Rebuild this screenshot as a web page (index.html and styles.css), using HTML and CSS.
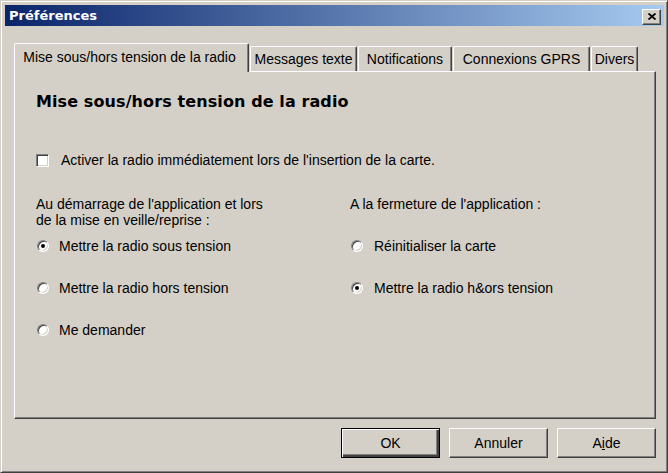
FILE: index.html
```html
<!DOCTYPE html>
<html lang="fr">
<head>
  <meta charset="UTF-8" />
  <title>Préférences</title>
  <link rel="stylesheet" href="styles.css">
</head>
<body>
  <div class="window">
    <div class="titlebar">
      <span class="title">Préférences</span>
      <button class="close" aria-label="Fermer">
        <svg width="8" height="7" viewBox="0 0 8 7">
          <path d="M0.5 0.5 L7.5 6.5 M7.5 0.5 L0.5 6.5" stroke="#000" stroke-width="1.8" fill="none"/>
        </svg>
      </button>
    </div>

    <div class="content">
      <div class="tabs">
        <div class="tab active">Mise sous/hors tension de la radio</div>
        <div class="tab tab-messages">Messages texte</div>
        <div class="tab tab-notif">Notifications</div>
        <div class="tab tab-gprs">Connexions GPRS</div>
        <div class="tab tab-divers">Divers</div>
      </div>

      <div class="panel">
        <h1>Mise sous/hors tension de la radio</h1>

        <label class="row check-row">
          <span class="checkbox"></span>
          Activer la radio immédiatement lors de l'insertion de la carte.
        </label>

        <div class="columns">
          <div class="column">
            <div class="group-label">Au démarrage de l'application et lors<br>de la mise en veille/reprise :</div>
            <label class="row radio-row"><span class="radio on"></span>Mettre la radio sous tension</label>
            <label class="row radio-row"><span class="radio"></span>Mettre la radio hors tension</label>
            <label class="row radio-row"><span class="radio"></span>Me demander</label>
          </div>
          <div class="column right">
            <div class="group-label">A la fermeture de l'application :</div>
            <label class="row radio-row"><span class="radio"></span>Réinitialiser la carte</label>
            <label class="row radio-row"><span class="radio on"></span>Mettre la radio h&amp;ors tension</label>
          </div>
        </div>
      </div>

      <div class="buttons">
        <button class="btn default">OK</button>
        <button class="btn">Annuler</button>
        <button class="btn">A<u>i</u>de</button>
      </div>
    </div>
  </div>
</body>
</html>
```

FILE: styles.css
```css
* {
  box-sizing: border-box;
  margin: 0;
  padding: 0;
}

body {
  width: 668px;
  height: 473px;
  background: #d4d0c8;
  font-family: 'Liberation Sans', Arial, sans-serif;
  font-size: 14px;
  color: #000;
  overflow: hidden;
}

.window {
  width: 668px;
  height: 473px;
  background: #d4d0c8;
  border: 1px solid;
  border-color: #d4d0c8 #404040 #404040 #d4d0c8;
  box-shadow: inset 1px 1px #fff, inset -1px -1px #808080;
  padding: 4px 3px 3px 4px;
  display: flex;
  flex-direction: column;
}

.titlebar {
  height: 21px;
  background: linear-gradient(to right, #0a246a, #a6caf0);
  display: flex;
  align-items: center;
  justify-content: space-between;
  padding: 0 3px 0 4px;
}

.title {
  color: #fff;
  font-family: 'DejaVu Sans', Verdana, sans-serif;
  font-weight: bold;
  font-size: 13px;
}

.close {
  width: 19px;
  height: 16px;
  margin-top: 2px;
  background: #d4d0c8;
  border: 1px solid;
  border-color: #fff #404040 #404040 #fff;
  box-shadow: inset -1px -1px #808080;
  display: flex;
  align-items: center;
  justify-content: center;
}

.content {
  flex: 1;
  padding: 0 8px 0 9px;
  display: flex;
  flex-direction: column;
}

.tabs {
  margin-top: 16px;
  height: 29px;
  display: flex;
  align-items: flex-end;
  position: relative;
  z-index: 1;
}

.tab {
  height: 25px;
  display: flex;
  align-items: center;
  justify-content: center;
  border: 1px solid;
  border-bottom: none;
  border-color: #fff #404040 transparent #fff;
  border-radius: 2px 2px 0 0;
  box-shadow: inset -1px 0 #808080;
  white-space: nowrap;
}

.tab + .tab {
  margin-left: 1px;
}

.tab.active {
  width: 235px;
  height: 29px;
  padding: 0 4px 3px 0;
  margin-bottom: -1px;
  background: #d4d0c8;
}

.tab-messages { width: 107px; }
.tab-notif { width: 94px; }
.tab-gprs { width: 137px; }
.tab-divers { width: 47px; }

.panel {
  height: 348px;
  border: 1px solid;
  border-color: #fff #404040 #404040 #fff;
  box-shadow: inset -1px -1px #808080;
  padding: 20px 20px 0 21px;
  display: flex;
  flex-direction: column;
}

h1 {
  font-family: 'DejaVu Sans', Verdana, sans-serif;
  font-size: 16px;
  line-height: 20px;
  font-weight: bold;
  letter-spacing: 0.1px;
}

.row {
  display: flex;
  align-items: center;
  height: 16px;
  white-space: nowrap;
}

.check-row {
  margin-top: 40px;
  gap: 12px;
}

.checkbox {
  width: 13px;
  height: 13px;
  background: #fff;
  border: 1px solid;
  border-color: #808080 #fff #fff #808080;
  box-shadow: inset 1px 1px #404040, inset -1px -1px #d4d0c8;
}

.columns {
  margin-top: 31px;
  display: grid;
  grid-template-columns: 314px 1fr;
}

.column {
  display: flex;
  flex-direction: column;
  gap: 26px;
}

.group-label {
  height: 32px;
  line-height: 16px;
  margin-top: -3px;
  margin-bottom: -16px;
}

.radio-row {
  gap: 10px;
  padding-left: 1px;
}

.right .radio-row {
  gap: 11px;
}

.radio {
  position: relative;
  width: 12px;
  height: 12px;
  border-radius: 50%;
  background: #fff;
  border: 1px solid;
  border-color: #808080 #fff #fff #808080;
  box-shadow: inset 1px 1px #404040, inset -1px -1px #d4d0c8;
}

.radio.on::after {
  content: '';
  position: absolute;
  left: 3px;
  top: 3px;
  width: 4px;
  height: 4px;
  border-radius: 50%;
  background: #000;
}

.buttons {
  margin-top: 9px;
  display: flex;
  justify-content: flex-end;
  gap: 9px;
}

.btn {
  width: 99px;
  height: 30px;
  font-family: 'Liberation Sans', Arial, sans-serif;
  font-size: 14px;
  color: #000;
  background: #d4d0c8;
  border: 1px solid;
  border-color: #fff #404040 #404040 #fff;
  box-shadow: inset -1px -1px #808080;
}

.btn.default {
  border-color: #000;
  box-shadow: inset 1px 1px #fff, inset -2px -2px #404040, inset -3px -3px #808080;
}
```
